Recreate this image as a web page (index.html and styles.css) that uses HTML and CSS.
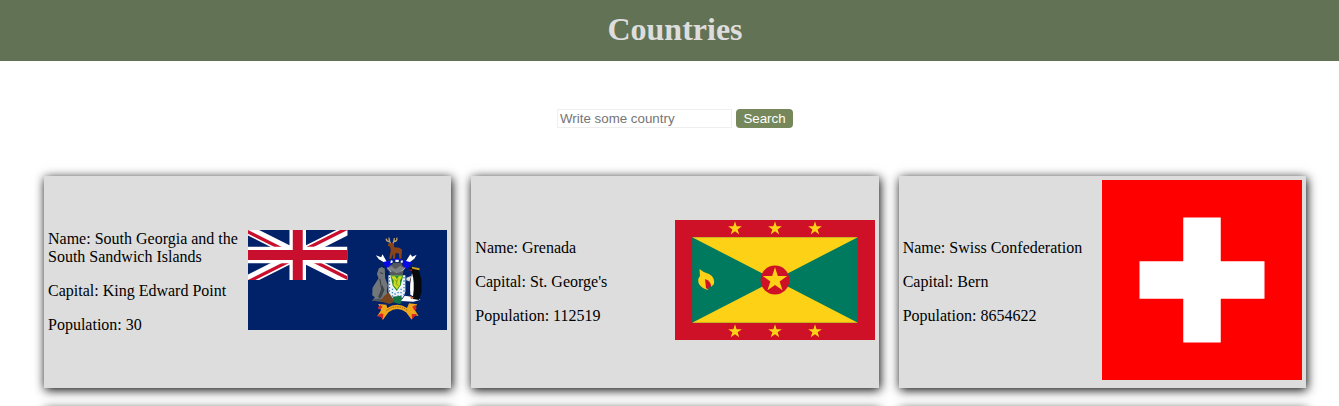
FILE: index.html
```html
<!DOCTYPE html>
<html lang="en">
<head>
<meta charset="utf-8">
<title>Countries</title>
<link rel="stylesheet" href="styles.css">
</head>
<body>
<header class="header"><h1 class="title">Countries</h1></header>
<main class="page">
<form class="search">
<input class="search-input" type="text" placeholder="Write some country">
<button class="search-button" type="button">Search</button>
</form>
<section class="cards">
<article class="card">
<div class="info"><p>Name: South Georgia and the South Sandwich Islands</p><p>Capital: King Edward Point</p><p>Population: 30</p></div>
<div class="flag">
<svg width="199" height="100" viewBox="0 0 200 100" preserveAspectRatio="none">
<defs><clipPath id="canton"><path d="M0 0H100V50H0Z"/></clipPath>
<clipPath id="saltire"><path d="M50 25H100V50ZM50 25V50H0ZM50 25H0V0ZM50 25V0H100Z"/></clipPath></defs>
<path fill="#012169" d="M0 0H200V100H0Z"/>
<g clip-path="url(#canton)"><path d="M0 0L100 50M100 0L0 50" stroke="#fff" stroke-width="10"/>
<path d="M0 0L100 50M100 0L0 50" stroke="#c8102e" stroke-width="6.6" clip-path="url(#saltire)"/>
<path d="M50 0V50M0 25H100" stroke="#fff" stroke-width="16.6"/><path d="M50 0V50M0 25H100" stroke="#c8102e" stroke-width="10"/></g>
<g transform="translate(112.5 -2) scale(.3333)">
<path fill="#0909e8" d="M66 95Q76 123 92 125L95 96L108 90L128 94L131 125Q154 121 157 97L147 103Q136 94 124 96L101 96Q82 103 66 95Z"/>
<path fill="#fff" d="M48 82L64 88L68 79L80 100L71 102L57 94ZM171 80L158 86L152 79L139 99L151 102L164 92ZM93 97L99 98L98 104L92 106ZM107 95H117V102H107ZM123 98L129 97V104H123Z"/>
<path fill="none" stroke="#c2a168" stroke-width="4" d="M94 50L90 41Q80 42 79 32M90 41L87 29M98 50L102 41Q114 40 111 29M102 41L104 30"/>
<path fill="#8b4317" d="M86 46L101 45L104 58L119 59L127 65L125 92H119L117 76H107L106 92H100L98 77L95 92H88L93 67L91 56L84 53Z"/>
<path fill="#55585d" d="M91 112Q98 110 101 104L125 104L129 114L137 120L131 130L129 143H92L88 130L81 122Z"/>
<path fill="#7c8085" d="M95 114L107 124L122 113L132 119L123 132L110 136L93 127L84 120Z"/>
<path stroke="#fff" stroke-width="2" d="M82 119Q90 125 94 132M136 119L125 130" fill="none"/>
<path fill="#eef4f7" d="M86 142H137V190Q135 210 111 223Q88 211 86 190Z"/>
<path fill="none" stroke="#3b7fc4" stroke-width="4" stroke-dasharray="4 6" d="M89 147V208M98 182V214M133 147V204M124 182V213M106 196V219M115 192V220"/>
<path fill="#2c8a29" d="M92 142H131L123 172L111 189L99 173Z"/>
<path fill="#cdda24" d="M94 145H106L111 153L117 145H128L121 157V170L112 184L101 172L102 158Z"/>
<path stroke="#4c8518" stroke-width="2" d="M104 154L112 161L109 167L116 173M116 151L111 160" fill="none"/>
<path fill="#71767a" d="M66 117L75 122L76 151L84 171L81 190L86 206L81 222L36 218L45 208L37 202L38 179L56 151L51 138L57 121Z"/>
<path stroke="#34393d" stroke-width="3" fill="none" d="M61 134L70 137M60 153L66 186L56 207M39 216H81"/>
<path fill="#3f4549" d="M67 170L74 185L65 207L56 214Z"/>
<path fill="#78461e" d="M60 220L73 204L86 193L99 211L103 222L89 228Z"/>
<path fill="#157442" d="M99 206L123 203L130 215L121 229L101 223Z"/>
<path fill="#fff" d="M124 219L135 203L160 207L183 215L161 221Z"/>
<path fill="#ddd" d="M140 149L154 144L152 161L140 157Z"/>
<path fill="#07090c" d="M148 121L163 116L178 128L185 152L186 190L178 216L160 213L151 196L150 158L157 142L156 128Z"/>
<path fill="#fff" d="M157 136Q166 163 160 205L152 200Q149 166 157 136Z"/>
<path fill="#d2a51c" d="M156 116L180 121L179 127L158 122Z"/><path fill="#d71524" d="M146 127L157 124L158 128Z"/>
<path fill="#d96b32" d="M151 205L164 209L154 214Z"/>
<path fill="#efa61b" d="M55 228L80 230L82 240Q112 220 142 240L148 226L172 229L165 245L177 264L160 261L156 275L139 253Q112 233 86 253L69 276L63 263L52 265L64 246Z"/>
<path fill="#da2825" d="M53 240L62 230L68 237L61 245ZM52 264L64 256L71 259L69 274L62 267ZM158 236L168 230L171 243L164 247ZM156 258L172 258L164 266L157 274Z"/>
<path fill="none" stroke="#5b3b16" stroke-width="2" stroke-dasharray="4 3" d="M80 248Q112 225 145 248"/>
</g>
</svg></div>
</article>
<article class="card">
<div class="info"><p>Name: Grenada</p><p>Capital: St. George's</p><p>Population: 112519</p></div>
<div class="flag">
<svg width="200" height="120" viewBox="0 0 200 120">
<defs><path id="star" d="M0-1L.2245-.309H.9511L.3633.118L.5878.809L0 .382L-.5878.809L-.3633.118L-.9511-.309H-.2245Z"/></defs>
<path fill="#ce1126" d="M0 0H200V120H0Z"/><path fill="#007a5e" d="M17.14 17.14H182.86V102.86H17.14Z"/>
<path fill="#fcd116" d="M17.14 17.14H182.86L17.14 102.86H182.86Z"/><circle cx="100" cy="60" r="14.4" fill="#ce1126"/>
<g fill="#fcd116"><use href="#star" transform="translate(100 60) scale(12.8)"/>
<use href="#star" transform="translate(60 8.57) scale(7.2)"/><use href="#star" transform="translate(100 8.57) scale(7.2)"/><use href="#star" transform="translate(140 8.57) scale(7.2)"/>
<use href="#star" transform="translate(60 111.43) scale(7.2)"/><use href="#star" transform="translate(100 111.43) scale(7.2)"/><use href="#star" transform="translate(140 111.43) scale(7.2)"/>
<path d="M24.5 49Q29 53 34 54Q40 57 39 64L35 68L34 70Q27 69 24 64Q22 59 25 56Z"/></g>
<path fill="#ce1126" d="M30 59Q36 61 36.3 67L34 70L31 68Z"/><path fill="#007a5e" d="M34.5 66L36.5 67L34.5 71L33 69Z"/>
</svg></div>
</article>
<article class="card">
<div class="info"><p>Name: Swiss Confederation</p><p>Capital: Bern</p><p>Population: 8654622</p></div>
<div class="flag"><svg width="200" height="200" viewBox="0 0 32 32"><path fill="red" d="M0 0H32V32H0Z"/><path fill="#fff" d="M13 6H19V13H26V19H19V26H13V19H6V13H13Z"/></svg></div>
</article>
<article class="card"></article><article class="card"></article><article class="card"></article>
</section>
</main>
</body>
</html>
```

FILE: styles.css
```css
html { height: 406px; overflow: hidden; }
body { margin: 0; width: 1350px; height: 406px; overflow: hidden; background: #fff; color: #000; font: 16px/18px "Liberation Serif", "Times New Roman", serif; }
.header { height: 61px; display: flex; align-items: center; justify-content: center; background: #627254; }
.title { margin: 0; padding-bottom: 3px; color: #ddd; font-size: 32px; line-height: 36px; }
.page { box-sizing: border-box; height: 345px; overflow: hidden; padding: 48px 44px 0; }
.search { display: flex; justify-content: center; gap: 4px; height: 19px; margin-bottom: 48px; }
.search-input { box-sizing: border-box; width: 175px; height: 19px; padding: 1px 2px; border: 1px solid #eee; border-radius: 0; background: #fff; font: 13.333px "Liberation Sans", Arial, sans-serif; }
.search-input::placeholder { color: #757575; }
.search-button { box-sizing: border-box; width: 57px; height: 19px; padding: 0; border: 0; border-radius: 4px; background: #76885b; color: #fff; font: 13.333px/19px "Liberation Sans", Arial, sans-serif; }
.cards { display: grid; grid-template-columns: repeat(3, 1fr); gap: 20px; }
.card { box-sizing: border-box; height: 212px; padding: 4px; display: flex; justify-content: space-between; align-items: center; background: #ddd; box-shadow: 1px 2px 10px #000; }
.info { min-width: 0; }
.info p { margin: 16px 0; }
.flag { flex: none; padding-bottom: 4px; }
.flag svg { display: block; }
```
